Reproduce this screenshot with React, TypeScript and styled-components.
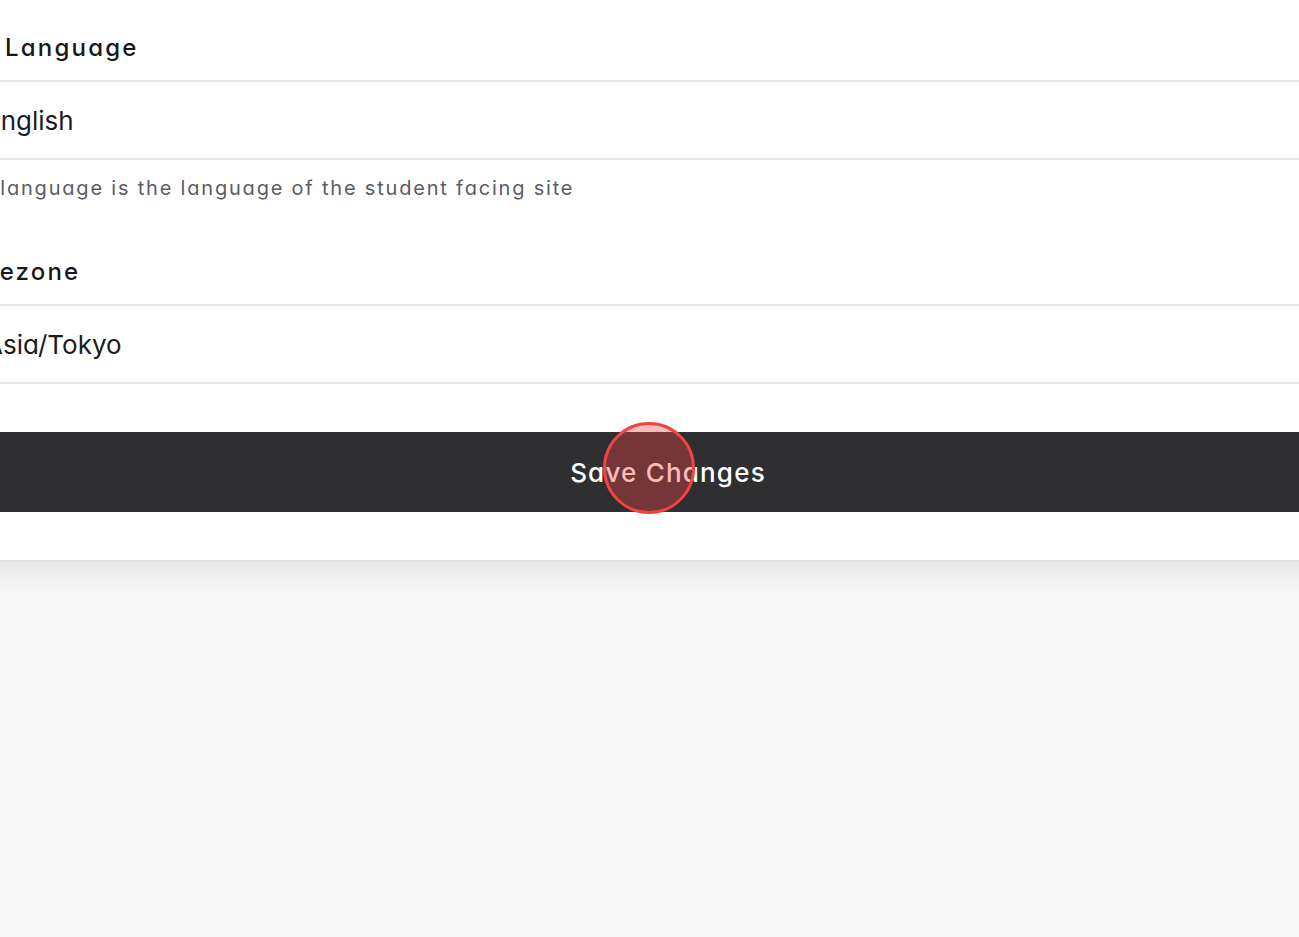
import React from "react";
import styled, { createGlobalStyle } from "styled-components";

const GlobalStyle = createGlobalStyle`
  html, body {
    margin: 0;
    padding: 0;
    background: #f9f9f9;
    overflow: hidden;
  }
  * {
    box-sizing: border-box;
  }
`;

const Page = styled.div`
  position: relative;
  min-height: 100vh;
  width: 100vw;
  background-color: #f9f9f9;
  font-family: "Inter", "Liberation Sans", sans-serif;
  font-feature-settings: "cv11" 1;
`;

const Card = styled.section`
  background: #ffffff;
  margin-left: -50px;
  width: 1436px;
  padding: 32px 0 48px;
  border-bottom: 1px solid #e2e2e2;
  box-shadow: 0 12px 30px rgba(0, 0, 0, 0.09);
  display: flex;
  flex-direction: column;
`;

const Field = styled.div<{ $spaced?: boolean }>`
  display: flex;
  flex-direction: column;
  margin-bottom: ${(p) => (p.$spaced ? "54px" : "48px")};
`;

const Label = styled.label<{ $shift?: number }>`
  margin-left: ${(p) => p.$shift ?? 0}px;
  font-size: 24px;
  line-height: 32px;
  font-weight: 500;
  letter-spacing: 2.2px;
  color: #18181b;
  margin-bottom: 16px;
`;

const Select = styled.div`
  height: 80px;
  border-top: 2px solid #e6e6e8;
  border-bottom: 2px solid #e6e6e8;
  display: flex;
  align-items: center;
  padding-left: 35px;
  font-size: 26px;
  color: #1c1c1f;
`;

const Help = styled.p`
  margin: 14px 0 0;
  font-size: 20px;
  line-height: 28px;
  letter-spacing: 1.8px;
  color: #5c5c66;
`;

const SaveButton = styled.button`
  height: 80px;
  width: 100%;
  border: none;
  background: #2f2f31;
  color: #ffffff;
  font-family: inherit;
  font-feature-settings: "cv11" 1;
  font-size: 26px;
  font-weight: 500;
  letter-spacing: 1.2px;
  cursor: pointer;
`;

const ClickMark = styled.span`
  position: absolute;
  left: 603px;
  top: 422px;
  width: 92px;
  height: 92px;
  border-radius: 50%;
  border: 3px solid #f04343;
  background: rgba(238, 66, 66, 0.36);
  pointer-events: none;
`;

const App = () => {
  return (
    <Page>
      <GlobalStyle />
      <Card>
        <Field $spaced>
          <Label $shift={-6}>Site Language</Label>
          <Select>English</Select>
          <Help>Site language is the language of the student facing site</Help>
        </Field>
        <Field>
          <Label>Timezone</Label>
          <Select>Asia/Tokyo</Select>
        </Field>
        <SaveButton>Save Changes</SaveButton>
      </Card>
      <ClickMark />
    </Page>
  );
};

export default App;
